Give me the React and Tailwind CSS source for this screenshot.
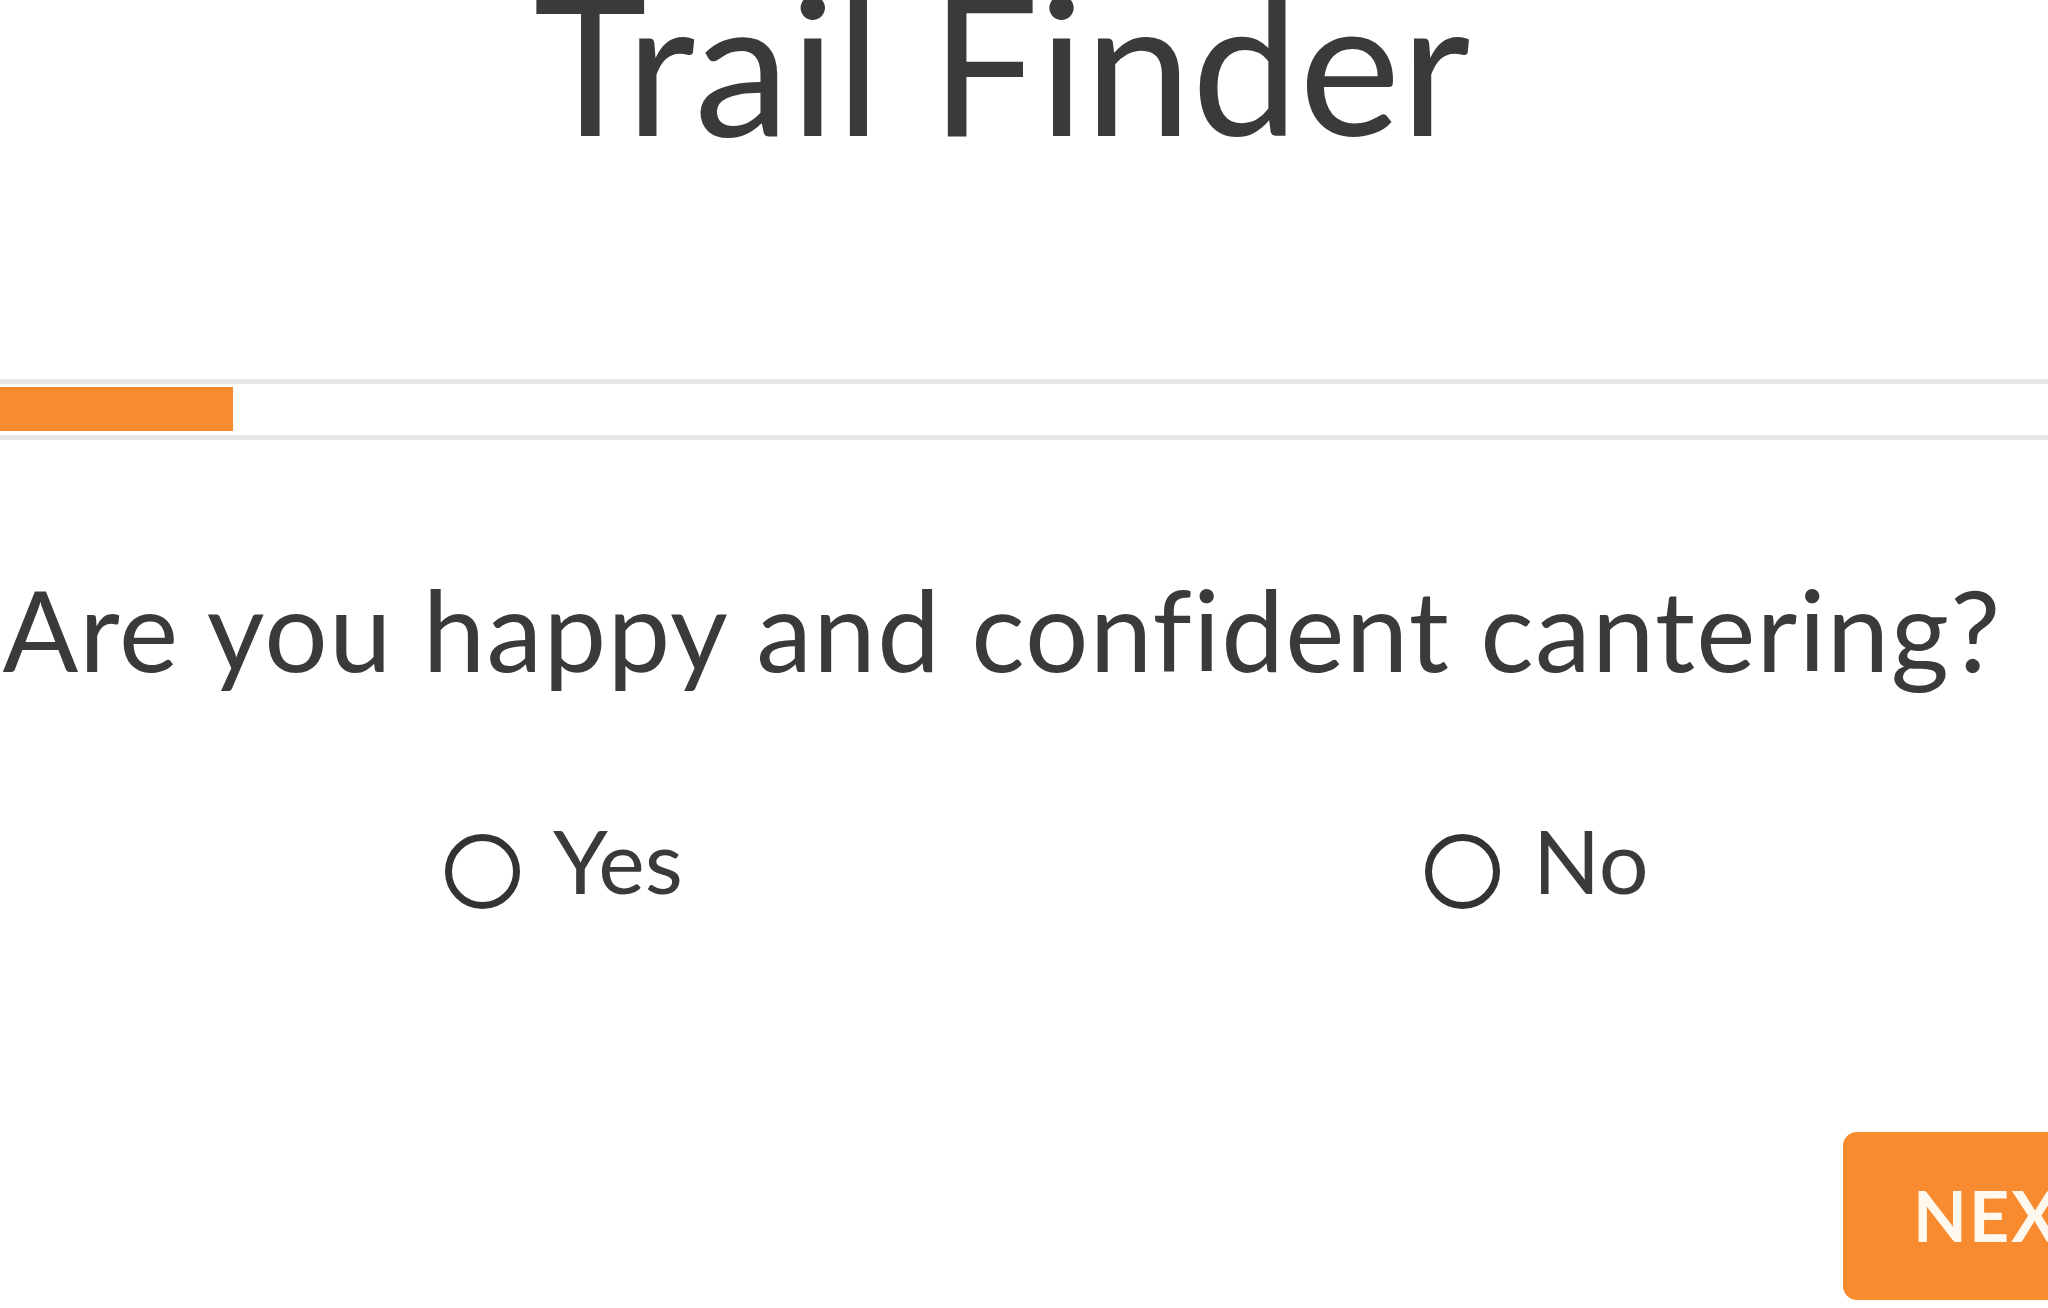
import React from 'react';
import { useState } from 'react';

const options = ['Yes', 'No'];

const TrailFinder = () => {
  const [answer, setAnswer] = useState(null);
  const progress = 233; // px of the orange fill

  return (
    <div className="w-full h-[1308px] overflow-hidden bg-white text-[#3a3a3a] font-['Lato','Liberation_Sans',sans-serif]">
      {/* title */}
      <div className="w-[2004px]">
        <h1 className="mt-[-34px] text-center text-[192px] leading-[192px] font-normal">
          Trail Finder
        </h1>
      </div>

      {/* progress */}
      <div className="mt-[221px] w-full border-y-[5px] border-[#e6e6e6] pt-[3px] pb-[4px]">
        <div className="h-[44px] bg-[#f88a2f]" style={{ width: progress }} />
      </div>

      {/* question */}
      <div className="w-[2004px]">
        <h2 className="mt-[122px] text-center text-[112px] tracking-[1.3px] leading-[1.2] font-normal whitespace-nowrap">
          Are you happy and confident cantering?
        </h2>
      </div>

      <div className="mt-[112px] flex pl-[445px]">
        {options.map((opt) => (
          <label
            key={opt}
            onClick={() => setAnswer(opt)}
            className="shrink-0 w-[980px] flex items-center gap-[33px] cursor-pointer"
          >
            <span className="mt-[20px] w-[75px] h-[75px] rounded-full border-[7px] border-[#333] flex items-center justify-center">
              {answer === opt && <span className="w-[35px] h-[35px] rounded-full bg-[#333]" />}
            </span>
            <span className="text-[88px] leading-[1.2]">{opt}</span>
          </label>
        ))}
      </div>

      <div className="mt-[218px] pl-[1843px] flex">
        <button className="shrink-0 h-[168px] px-[70px] rounded-[14px] bg-[#f88a2f] text-[#fff8ee] text-[70px] font-bold tracking-[2px]">
          NEXT
        </button>
      </div>
    </div>
  );
};

export default function App() {
  return <TrailFinder />;
}
